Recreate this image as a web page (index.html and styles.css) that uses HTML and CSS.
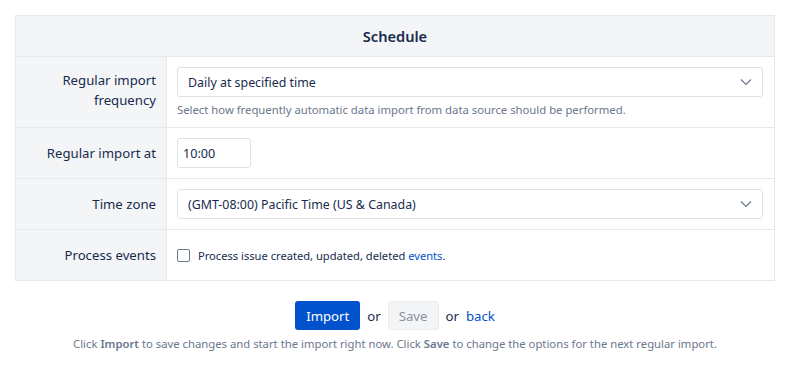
FILE: index.html
```html
<!DOCTYPE html>
<html>
<head>
<meta charset="utf-8">
<link rel="stylesheet" href="styles.css">
</head>
<body>
<div class="page">
  <table class="form">
    <colgroup><col class="c1"><col class="c2"></colgroup>
    <thead>
      <tr><th colspan="2" class="title">Schedule</th></tr>
    </thead>
    <tbody>
      <tr class="r1">
        <td class="label">Regular import frequency</td>
        <td class="field">
          <div class="select"><span>Daily at specified time</span>
            <svg class="chev" width="12" height="8" viewBox="0 0 12 8"><path d="M1 1.5l5 5 5-5" fill="none" stroke="#6b778c" stroke-width="1.2"/></svg>
          </div>
          <div class="help">Select how frequently automatic data import from data source should be performed.</div>
        </td>
      </tr>
      <tr class="r2">
        <td class="label">Regular import at</td>
        <td class="field"><div class="input">10:00</div></td>
      </tr>
      <tr class="r2">
        <td class="label">Time zone</td>
        <td class="field">
          <div class="select"><span>(GMT-08:00) Pacific Time (US &amp; Canada)</span>
            <svg class="chev" width="12" height="8" viewBox="0 0 12 8"><path d="M1 1.5l5 5 5-5" fill="none" stroke="#6b778c" stroke-width="1.2"/></svg>
          </div>
        </td>
      </tr>
      <tr class="r2">
        <td class="label">Process events</td>
        <td class="field">
          <label class="check"><span class="box"></span><span class="ctext">Process issue created, updated, deleted <a href="#">events</a>.</span></label>
        </td>
      </tr>
    </tbody>
  </table>
  <div class="actions">
    <button class="btn primary">Import</button>
    <span class="or">or</span>
    <button class="btn disabled">Save</button>
    <span class="or">or</span>
    <a href="#" class="back">back</a>
  </div>
  <div class="note">Click <b>Import</b> to save changes and start the import right now. Click <b>Save</b> to change the options for the next regular import.</div>
</div>
</body>
</html>
```
FILE: styles.css
```css
html, body { margin: 0; padding: 0; background: #fff; }
body {
  font-family: "Noto Sans", "Open Sans", sans-serif;
  font-size: 13px;
  color: #172b4d;
}
.page { padding: 15px 25px 0 15px; }
.form {
  width: 760px;
  table-layout: fixed;
  border-collapse: collapse;
  border: 1px solid #e6e8ec;
}
.c1 { width: 151px; }
.form th, .form td { border: 1px solid #e6e8ec; padding: 0; }
.title {
  background: #f4f5f7;
  height: 40px;
  font-size: 14.6px;
  font-weight: 600;
  text-align: center;
}
.label {
  background: #f4f5f7;
  text-align: right;
  padding: 0 10px !important;
  font-size: 13.2px;
  line-height: 20px;
}
.field { padding: 10px 11px 0 10px !important; vertical-align: top; }
.r1 { height: 71px; }
.r1 .label { vertical-align: top; padding-top: 13px !important; }
.r2 { height: 51px; }
.r2 .field { padding-top: 0 !important; vertical-align: middle; }
.select {
  height: 28px;
  border: 1px solid #dfe1e6;
  border-radius: 3px;
  display: flex;
  align-items: center;
  justify-content: space-between;
  padding: 0 10px;
  font-size: 12.4px;
}
.help { font-size: 11.3px; color: #6b778c; margin-top: 5px; }
.input {
  width: 62px;
  height: 28px;
  border: 1px solid #dfe1e6;
  border-radius: 3px;
  display: flex;
  align-items: center;
  padding: 0 5px;
  font-size: 12.6px;
}
.check { display: flex; align-items: center; gap: 8px; font-size: 11.15px; }
.box {
  width: 11px; height: 11px;
  border: 1px solid #6b778c;
  border-radius: 2px;
  background: #fff;
}
a { color: #0052cc; text-decoration: none; }
.actions {
  display: flex;
  justify-content: center;
  align-items: center;
  margin-top: 20px;
  font-size: 13.2px;
}
.btn {
  font-family: inherit;
  font-size: 13.2px;
  height: 29px;
  border: none;
  border-radius: 3px;
  padding: 0 11px;
}
.primary { background: #0052cc; color: #fff; }
.disabled { background: #f4f5f7; color: #8993a4; border: 1px solid #ebecf0; padding: 0 10px; }
.or { margin: 0 7px; }
.note {
  text-align: center;
  font-size: 11.3px;
  color: #6b778c;
  margin-top: 6px;
}
.note b { font-weight: 600; }
```
